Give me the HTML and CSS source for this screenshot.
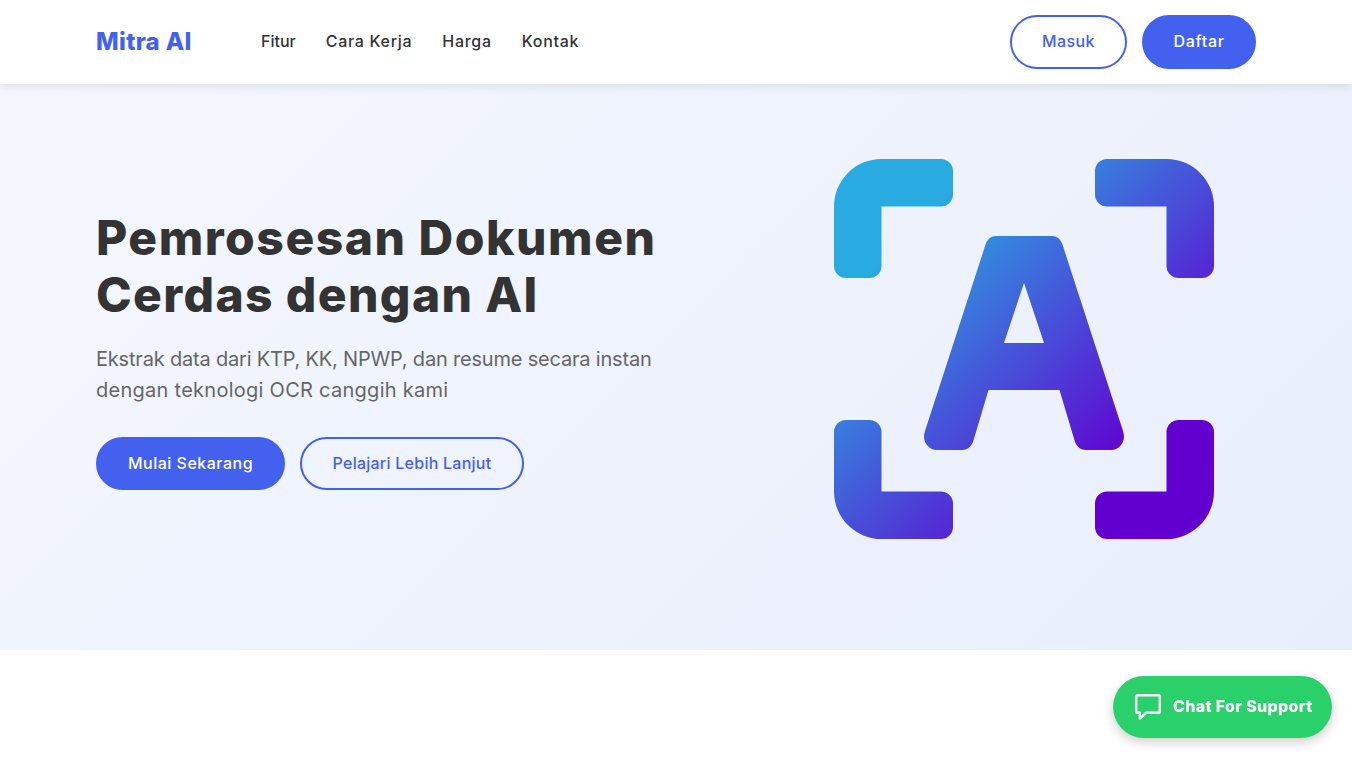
FILE: index.html
```html
<!DOCTYPE html>
<html lang="en">

<head>
    <meta charset="UTF-8">
    <meta name="viewport" content="width=device-width, initial-scale=1.0">
    <title>Mitra AI</title>
    <link rel="stylesheet" href="styles.css">
</head>

<body>
    <header class="site-header">
        <a href="#" class="logo">Mitra AI</a>
        <nav class="main-nav">
            <a href="#">Fitur</a>
            <a href="#">Cara Kerja</a>
            <a href="#">Harga</a>
            <a href="#">Kontak</a>
        </nav>
        <div class="auth-buttons">
            <a href="#" class="btn btn-outline btn-masuk">Masuk</a>
            <a href="#" class="btn btn-primary btn-daftar">Daftar</a>
        </div>
    </header>

    <section class="hero">
        <div class="hero-text">
            <h1><span class="title-first">Pemrosesan Dokumen</span><br><span class="title-second">Cerdas dengan AI</span></h1>
            <p><span class="lead-first">Ekstrak data dari KTP, KK, NPWP, dan resume secara instan</span><br><span class="lead-second">dengan teknologi OCR canggih kami</span></p>
            <div class="hero-buttons">
                <a href="#" class="btn btn-primary btn-mulai">Mulai Sekarang</a>
                <a href="#" class="btn btn-outline btn-pelajari">Pelajari Lebih Lanjut</a>
            </div>
        </div>
        <svg class="hero-icon" viewBox="0 0 380 380" width="380" height="380" aria-hidden="true">
            <defs>
                <linearGradient id="scanGradient" gradientUnits="userSpaceOnUse" x1="0" y1="0" x2="380" y2="380">
                    <stop offset="0.19" stop-color="#29abe2"/>
                    <stop offset="0.78" stop-color="#6200d0"/>
                </linearGradient>
            </defs>
            <g fill="url(#scanGradient)">
                <path d="M47.500 0H107a12 12 0 0 1 12 12V35.500a12 12 0 0 1-12 12H47.500V107a12 12 0 0 1-12 12H12a12 12 0 0 1-12-12V47.500A47.500 47.500 0 0 1 47.500 0Z"/>
                <path d="M332.500 0H273a12 12 0 0 0-12 12V35.500a12 12 0 0 0 12 12H332.500V107a12 12 0 0 0 12 12H368a12 12 0 0 0 12-12V47.500A47.500 47.500 0 0 0 332.500 0Z"/>
                <path d="M47.500 380H107a12 12 0 0 0 12-12V344.500a12 12 0 0 0-12-12H47.500V273a12 12 0 0 0-12-12H12a12 12 0 0 0-12 12V332.500A47.500 47.500 0 0 0 47.500 380Z"/>
                <path d="M332.500 380H273a12 12 0 0 1-12-12V344.500a12 12 0 0 1 12-12H332.500V273a12 12 0 0 1 12-12H368a12 12 0 0 1 12 12V332.500A47.500 47.500 0 0 1 332.500 380Z"/>
                <path fill-rule="evenodd" d="M151.700 85C153.500 80 157 77 162 77H218C223 77 226.500 80 228.300 85L289 272C292.500 282 286 291 277 291H252C247 291 243 288 241 283L225.500 231H154.500L139 283C137 288 133 291 128 291H103C94 291 87.500 282 91 272ZM190 124L170 184H210Z"/>
            </g>
        </svg>
    </section>

    <a href="#" class="chat-button">
        <svg viewBox="0 0 26 26" width="26" height="26" aria-hidden="true">
            <path fill="none" stroke="#fff" stroke-width="2.400" stroke-linejoin="round" d="M2.500 1.200H23.500a1.300 1.300 0 0 1 1.300 1.300V17.500a1.300 1.300 0 0 1-1.300 1.300H11L4.800 24.500V18.800H2.500a1.300 1.300 0 0 1-1.300-1.300V2.500A1.300 1.300 0 0 1 2.500 1.200Z"/>
        </svg>
        <span>Chat For Support</span>
    </a>
</body>

</html>
```
FILE: styles.css
```css
body {
    margin: 0;
    padding: 0;
    height: 760px;
    overflow: hidden;
    background: #fff;
    color: #333;
    font-family: Inter, "Open Sans", sans-serif;
}

a {
    text-decoration: none;
}

/* Top bar */
.site-header {
    position: relative;
    z-index: 2;
    display: flex;
    align-items: center;
    height: 84px;
    padding: 0 96px;
    background: #fff;
    box-shadow: 0 2px 10px rgba(0, 0, 0, 0.1);
}

.logo {
    width: 165px;
    padding-bottom: 2px;
    font-size: 24px;
    font-weight: 800;
    letter-spacing: 0.35px;
    color: #4361ee;
}

.main-nav {
    display: flex;
    gap: 30px;
    padding-bottom: 2px;
}

.main-nav a {
    font-size: 16px;
    font-weight: 500;
    letter-spacing: 0.7px;
    color: #333;
}

.main-nav a:first-child {
    letter-spacing: 0;
}

.auth-buttons {
    display: flex;
    gap: 15px;
    margin-left: auto;
}

/* Buttons */
.btn {
    display: flex;
    align-items: center;
    justify-content: center;
    box-sizing: border-box;
    padding-bottom: 1px;
    border: 2px solid #4361ee;
    border-radius: 30px;
    font-size: 16px;
    font-weight: 500;
}

.btn-primary {
    background: #4361ee;
    color: #fff;
}

.btn-outline {
    background: transparent;
    color: #4361ee;
}

.btn-masuk {
    width: 117px;
    height: 54px;
    padding-bottom: 2px;
    letter-spacing: 0.4px;
}

.btn-daftar {
    width: 114px;
    height: 54px;
    padding-bottom: 2px;
    letter-spacing: 0.7px;
}

.btn-mulai {
    width: 189px;
    height: 53px;
    letter-spacing: 0.5px;
}

.btn-pelajari {
    width: 224px;
    height: 53px;
    letter-spacing: 0.25px;
}

/* Hero */
.hero {
    display: flex;
    align-items: center;
    justify-content: space-between;
    box-sizing: border-box;
    height: 566px;
    padding: 0 138px 36px 96px;
    background: linear-gradient(135deg, #f4f7fe, #e8eefc);
}

.hero-text h1 {
    margin: 0 0 21px;
    font-size: 48px;
    font-weight: 800;
    line-height: 57px;
    color: #333;
}

.title-first {
    letter-spacing: 1.53px;
}

.title-second {
    letter-spacing: 1.37px;
}

.hero-text p {
    margin: 0 0 31px;
    font-size: 20px;
    line-height: 31px;
    color: #666;
}

.lead-first {
    letter-spacing: -0.19px;
}

.lead-second {
    letter-spacing: 0.27px;
}

.hero-buttons {
    display: flex;
    gap: 15px;
}

.hero-icon {
    flex-shrink: 0;
}

/* Floating support button */
.chat-button {
    position: fixed;
    right: 20px;
    bottom: 22px;
    display: flex;
    align-items: center;
    gap: 12px;
    box-sizing: border-box;
    width: 219px;
    height: 62px;
    padding-left: 22px;
    border-radius: 31px;
    background: #2ad16a;
    box-shadow: 0 4px 12px rgba(0, 0, 0, 0.2);
    color: #fff;
    font-size: 16px;
    font-weight: 800;
    letter-spacing: 0.33px;
}

.chat-button span {
    padding-bottom: 2px;
}
```
